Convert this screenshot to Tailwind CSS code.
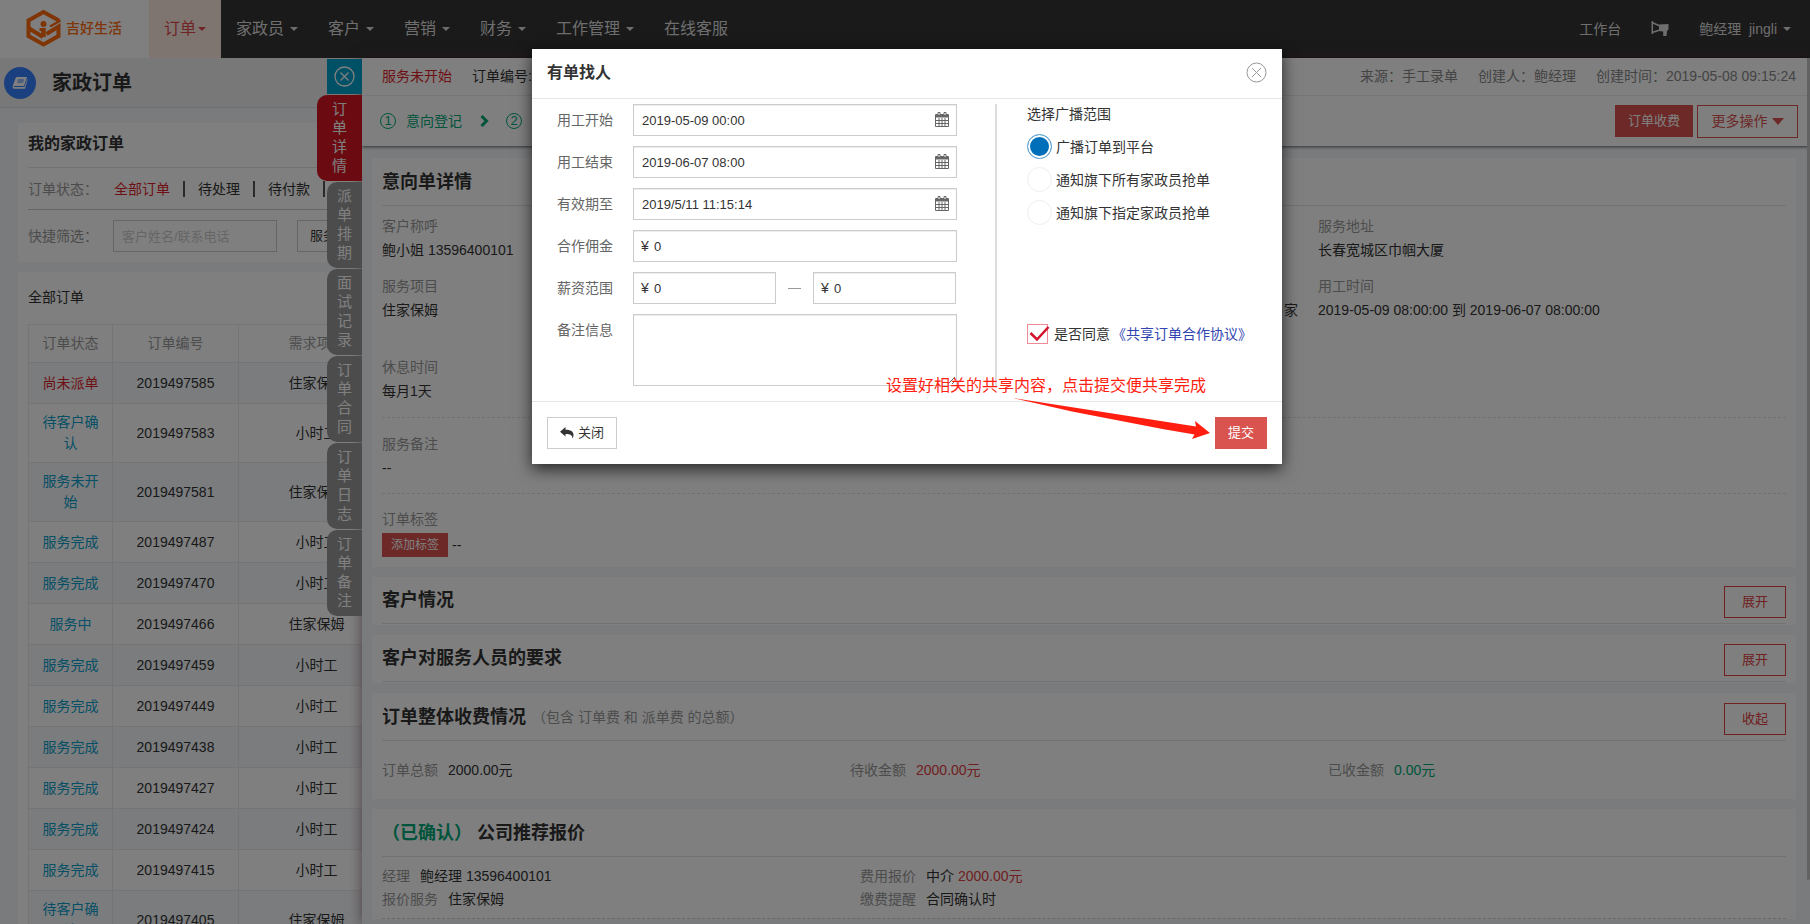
<!DOCTYPE html>
<html lang="zh-CN">
<head>
<meta charset="utf-8">
<title>家政订单</title>
<script src="https://cdn.jsdelivr.net/npm/@tailwindcss/browser@4"></script>
</head>
<body class="font-['Liberation_Sans','Noto_Sans_CJK_SC',sans-serif] text-sm leading-5 text-[#333]">
<div class="relative h-screen overflow-hidden bg-[#f3f6fb]">

<!-- top navigation -->
<header class="flex h-[58px] items-center bg-[#343434] text-base text-[#ddd]">
  <a href="#" class="flex h-full w-[149px] shrink-0 items-center gap-1 bg-white pb-0.5 pl-[26px] text-sm font-medium text-[#ff6a0d]">
    <svg class="h-[38px] w-9" viewBox="0 0 36 38" fill="none" stroke="#ff6a0d">
      <path d="M33 11.500 17.500 3 2.500 11.500v9" stroke-width="4"/>
      <path d="M2.500 19 17 28M2.500 20.500v6.500l15 8.500 15-8.500V17.500L20.500 25" stroke-width="4"/>
      <path d="M34.500 11.500 24 17.500" stroke-width="2.500"/>
      <circle cx="17.500" cy="15" r="3" fill="#ff6a0d" stroke="none"/>
      <path d="M13.500 20.500h3" stroke-width="3"/><path d="M17.500 19v9" stroke-width="4.500"/>
    </svg>
    <span>吉好生活</span>
  </a>
  <nav class="flex h-full items-center whitespace-nowrap">
    <a href="#" class="flex h-full items-center gap-0.5 bg-[#ffebe1] px-[15px] text-[#e0494b]">订单<svg class="h-1 w-2" viewBox="0 0 8 4"><path d="M0 0h8L4 4z" fill="currentColor"/></svg></a>
    <a href="#" class="flex items-center gap-1.5 px-[15px]">家政员<svg class="h-1 w-2" viewBox="0 0 8 4"><path d="M0 0h8L4 4z" fill="currentColor"/></svg></a>
    <a href="#" class="flex items-center gap-1.5 px-[15px]">客户<svg class="h-1 w-2" viewBox="0 0 8 4"><path d="M0 0h8L4 4z" fill="currentColor"/></svg></a>
    <a href="#" class="flex items-center gap-1.5 px-[15px]">营销<svg class="h-1 w-2" viewBox="0 0 8 4"><path d="M0 0h8L4 4z" fill="currentColor"/></svg></a>
    <a href="#" class="flex items-center gap-1.5 px-[15px]">财务<svg class="h-1 w-2" viewBox="0 0 8 4"><path d="M0 0h8L4 4z" fill="currentColor"/></svg></a>
    <a href="#" class="flex items-center gap-1.5 px-[15px]">工作管理<svg class="h-1 w-2" viewBox="0 0 8 4"><path d="M0 0h8L4 4z" fill="currentColor"/></svg></a>
    <a href="#" class="px-[15px]">在线客服</a>
  </nav>
  <div class="ml-auto flex items-center gap-[30px] pr-[19px] text-sm">
    <a href="#">工作台</a>
    <button type="button" aria-label="公告" class="h-4 w-[18px]">
      <svg class="h-4 w-[18px]" viewBox="0 0 18 16" fill="none" stroke="#ddd" stroke-width="1.500"><path d="M1.300 0v13M1 1.500 9 5M1 11.500l8-2.500"/><path d="M8 3.500 17.500 3v5.500L16 10l-.5 5h-3.300v-4.500L8 10z" fill="#ddd" stroke="none"/></svg>
    </button>
    <a href="#" class="flex items-center gap-1.5"><span>鲍经理&nbsp; jingli</span><svg class="h-1 w-2" viewBox="0 0 8 4"><path d="M0 0h8L4 4z" fill="currentColor"/></svg></a>
  </div>
</header>

<!-- order list page -->
<main>
  <div class="flex h-[50px] items-center gap-4 border-b border-[#d8dde2] bg-[#f1f1f1] pl-1">
    <span class="flex size-8 items-center justify-center rounded-full bg-[#3680ff]">
      <svg class="h-3.5 w-4" viewBox="0 0 16 14"><path d="M5 1h10l-3 9H2.500q-1 0-.8 1h10.800l2.800-8 .4.600L13 12.800H2Q0 12.500.8 9.800L3.500 2.300Q4 1 5 1z" fill="#fff"/><path d="M6 4h6M5.300 6h6" stroke="#3680ff"/></svg>
    </span>
    <h1 class="text-xl font-bold">家政订单</h1>
  </div>

  <section class="ml-[18px] mt-[15px] bg-white px-[10px] pb-[10px]">
    <h2 class="flex h-[45px] items-center border-b border-[#e5e5e5] pb-0.5 text-base font-bold">我的家政订单</h2>
    <div class="flex h-[42px] items-center border-b border-[#ccc]">
      <span class="w-[86px] text-[#999]">订单状态：</span>
      <a href="#" class="text-[#dd1f2b]">全部订单</a>
      <span class="mx-[13px] h-4 w-0.5 bg-[#555]"></span>
      <a href="#">待处理</a>
      <span class="mx-[13px] h-4 w-0.5 bg-[#555]"></span>
      <a href="#">待付款</a>
      <span class="mx-[13px] h-4 w-0.5 bg-[#555]"></span>
    </div>
    <div class="flex items-center pt-[10px]">
      <label for="quick" class="w-[85px] text-[#999]">快捷筛选：</label>
      <input id="quick" type="text" placeholder="客户姓名/联系电话" class="h-8 w-[164px] border border-[#ccc] px-2 text-[13px] placeholder:text-[#ccc]">
      <select aria-label="服务项目" class="ml-5 h-8 w-[164px] appearance-none border border-[#ccc] px-3 text-[13px]"><option>服务项目</option></select>
    </div>
  </section>

  <section class="ml-[18px] mt-[10px] bg-white px-[10px]">
    <h2 class="flex h-[52px] items-center pb-0.5 text-sm">全部订单</h2>
    <table class="w-full table-fixed border-collapse text-center leading-[21px] [&_td]:border [&_td]:border-[#eaeaea] [&_td]:px-3 [&_td]:py-2 [&_th]:border [&_th]:border-[#eaeaea] [&_a]:text-[#0aa0cc] [&_tbody_tr]:h-[41px] [&_tbody_tr:nth-child(odd)]:bg-[#f5f8fb]">
      <colgroup><col class="w-[84px]"><col class="w-[126px]"><col class="w-[156px]"><col></colgroup>
      <thead><tr class="h-[38px] text-[#999]"><th class="font-normal">订单状态</th><th class="font-normal">订单编号</th><th class="font-normal">需求项目</th><th></th></tr></thead>
      <tbody>
        <tr><td class="text-[#dd1f2b]">尚未派单</td><td>2019497585</td><td>住家保姆</td><td></td></tr>
        <tr><td><a href="#">待客户确认</a></td><td>2019497583</td><td>小时工</td><td></td></tr>
        <tr><td><a href="#">服务未开始</a></td><td>2019497581</td><td>住家保姆</td><td></td></tr>
        <tr><td><a href="#">服务完成</a></td><td>2019497487</td><td>小时工</td><td></td></tr>
        <tr><td><a href="#">服务完成</a></td><td>2019497470</td><td>小时工</td><td></td></tr>
        <tr><td><a href="#">服务中</a></td><td>2019497466</td><td>住家保姆</td><td></td></tr>
        <tr><td><a href="#">服务完成</a></td><td>2019497459</td><td>小时工</td><td></td></tr>
        <tr><td><a href="#">服务完成</a></td><td>2019497449</td><td>小时工</td><td></td></tr>
        <tr><td><a href="#">服务完成</a></td><td>2019497438</td><td>小时工</td><td></td></tr>
        <tr><td><a href="#">服务完成</a></td><td>2019497427</td><td>小时工</td><td></td></tr>
        <tr><td><a href="#">服务完成</a></td><td>2019497424</td><td>小时工</td><td></td></tr>
        <tr><td><a href="#">服务完成</a></td><td>2019497415</td><td>小时工</td><td></td></tr>
        <tr><td><a href="#">待客户确认</a></td><td>2019497405</td><td>住家保姆</td><td></td></tr>
      </tbody>
    </table>
  </section>
</main>

<!-- order detail drawer -->
<aside class="absolute bottom-0 right-0 top-[58px] w-4/5 bg-[#f3f6fb] shadow-[0_0_12px_rgba(80,40,50,0.6)]">
  <div class="absolute right-full top-px flex flex-col items-end gap-px text-[15px] leading-[19px] text-white">
    <button type="button" aria-label="收起详情" class="flex size-[35px] items-center justify-center bg-[#00a0cc]">
      <svg class="size-[21px]" viewBox="0 0 21 21" fill="none" stroke="#fff" stroke-width="1.300"><circle cx="10.500" cy="10.500" r="9.500"/><path d="m6.500 6.500 8 8M14.500 6.500l-8 8"/></svg>
    </button>
    <button type="button" class="w-[45px] rounded-l-[10px] bg-[#d71522] px-[15px] pb-1.5 pt-1">订单详情</button>
    <button type="button" class="w-[35px] rounded-l-[10px] bg-[#999] px-[10px] pb-1.5 pt-1">派单排期</button>
    <button type="button" class="w-[35px] rounded-l-[10px] bg-[#999] px-[10px] pb-1.5 pt-1">面试记录</button>
    <button type="button" class="w-[35px] rounded-l-[10px] bg-[#999] px-[10px] pb-1.5 pt-1">订单合同</button>
    <button type="button" class="w-[35px] rounded-l-[10px] bg-[#999] px-[10px] pb-1.5 pt-1">订单日志</button>
    <button type="button" class="w-[35px] rounded-l-[10px] bg-[#999] px-[10px] pb-1.5 pt-1">订单备注</button>
  </div>
  <div class="absolute right-0 top-0 h-[822px] w-[3px] rounded-b bg-[#c4c4c4]"></div>

  <div class="bg-white shadow-[0_1px_3px_rgba(0,0,0,0.6)]">
    <div class="flex h-[38px] items-center gap-5 border-b border-[#eee] pb-0.5 pl-5 pr-[14px]">
      <span class="text-[#dd1f2b]">服务未开始</span>
      <span>订单编号:</span>
      <span class="ml-auto text-[#888]">来源：手工录单</span>
      <span class="text-[#888]">创建人：鲍经理</span>
      <span class="text-[#888]">创建时间：2019-05-08 09:15:24</span>
    </div>
    <div class="flex h-[50px] items-center pl-[18px] pr-3 text-[#00a878]">
      <span class="flex size-4 items-center justify-center rounded-full border border-[#00a878] text-[13px]">1</span>
      <span class="ml-2.5">意向登记</span>
      <svg class="ml-[18px] h-3 w-[9px]" viewBox="0 0 9 12" fill="none" stroke="#00a878" stroke-width="3"><path d="m1.500 1 5 5-5 5"/></svg>
      <span class="ml-[17px] flex size-4 items-center justify-center rounded-full border border-[#00a878] text-[13px]">2</span>
      <button type="button" class="ml-auto h-8 w-[78px] bg-[#d9534f] text-[13px] text-white">订单收费</button>
      <button type="button" class="ml-1 flex h-[33px] w-[101px] items-center justify-center gap-1 border border-[#d9534f] text-[#d9534f]">更多操作<svg class="h-[7px] w-3" viewBox="0 0 12 7"><path d="M0 0h12L6 7z" fill="currentColor"/></svg></button>
    </div>
  </div>

  <div class="flex flex-col gap-[10px] py-3 pl-[10px] pr-[14px]">
    <section class="bg-white px-[10px] pb-[10px]">
      <h2 class="flex h-12 items-center border-b border-[#e5e5e5] text-lg font-bold">意向单详情</h2>
      <dl class="grid grid-cols-3 pt-2 [&_dt]:h-6 [&_dt]:leading-6 [&_dt]:text-[#999] [&_dd]:h-6 [&_dd]:leading-6">
        <div class="h-[60px]"><dt>客户称呼</dt><dd>鲍小姐 13596400101</dd></div>
        <div></div>
        <div><dt>服务地址</dt><dd>长春宽城区巾帼大厦</dd></div>
        <div class="h-[81px]"><dt>服务项目</dt><dd>住家保姆</dd></div>
        <div class="pr-5 text-right"><dt></dt><dd>家</dd></div>
        <div><dt>用工时间</dt><dd>2019-05-09 08:00:00 到 2019-06-07 08:00:00</dd></div>
        <div class="h-[62px]"><dt>休息时间</dt><dd>每月1天</dd></div>
      </dl>
      <div class="flex h-[76px] flex-col justify-center border-t border-dashed border-[#e0e0e0] leading-6"><span class="text-[#999]">服务备注</span><span>--</span></div>
      <div class="border-t border-dashed border-[#e0e0e0] pt-[13px]">
        <div class="h-[26px] leading-6 text-[#999]">订单标签</div>
        <div class="flex items-center gap-1"><button type="button" class="h-6 w-[66px] bg-[#d9534f] text-xs text-white">添加标签</button><span>--</span></div>
      </div>
    </section>

    <section class="bg-white px-[10px] pb-px">
      <div class="flex h-[47px] items-center border-b border-[#e5e5e5]"><h2 class="text-lg font-bold">客户情况</h2><button type="button" class="ml-auto mt-1 h-8 w-[62px] border border-[#e04040] text-[13px] text-[#e04040]">展开</button></div>
    </section>
    <section class="bg-white px-[10px] pb-px">
      <div class="flex h-[47px] items-center border-b border-[#e5e5e5]"><h2 class="text-lg font-bold">客户对服务人员的要求</h2><button type="button" class="ml-auto mt-1 h-8 w-[62px] border border-[#e04040] text-[13px] text-[#e04040]">展开</button></div>
    </section>
    <section class="bg-white px-[10px]">
      <div class="flex h-12 items-center border-b border-[#e5e5e5]"><h2 class="text-lg font-bold">订单整体收费情况</h2><span class="ml-1.5 text-[#999]">（包含 订单费 和 派单费 的总额）</span><button type="button" class="ml-auto mt-1 h-8 w-[62px] border border-[#e04040] text-[13px] text-[#e04040]">收起</button></div>
      <div class="grid h-[58px] grid-cols-3 items-center">
        <div class="flex gap-[10px]"><span class="text-[#999]">订单总额</span><span>2000.00元</span></div>
        <div class="flex gap-[10px]"><span class="text-[#999]">待收金额</span><span class="text-[#e04040]">2000.00元</span></div>
        <div class="flex gap-[10px] pl-[10px]"><span class="text-[#999]">已收金额</span><span class="text-[#00a878]">0.00元</span></div>
      </div>
    </section>
    <section class="bg-white px-[10px]">
      <h2 class="flex h-12 items-center gap-[5px] border-b border-[#e5e5e5] text-lg font-bold"><span class="text-[#00a878]">（已确认）</span>公司推荐报价</h2>
      <div class="grid h-[62px] grid-cols-3 content-center gap-y-[3px] border-b border-dashed border-[#d0d0d0]">
        <div class="flex gap-[10px]"><span class="text-[#999]">经理</span><span>鲍经理 13596400101</span></div>
        <div class="col-span-2 flex gap-[10px] pl-[10px]"><span class="text-[#999]">费用报价</span><span>中介 <b class="font-normal text-[#e04040]">2000.00元</b></span></div>
        <div class="flex gap-[10px]"><span class="text-[#999]">报价服务</span><span>住家保姆</span></div>
        <div class="col-span-2 flex gap-[10px] pl-[10px]"><span class="text-[#999]">缴费提醒</span><span>合同确认时</span></div>
      </div>
    </section>
  </div>
</aside>

<!-- dialog -->
<div class="absolute inset-0 bg-black/50 pl-1 pt-[49px]">
  <form role="dialog" aria-labelledby="dlg" class="relative mx-auto w-[750px] bg-white shadow-[0_5px_15px_rgba(0,0,0,0.7)]">
    <div class="flex h-[50px] items-center justify-between border-b border-[#e5e5e5] px-[15px] pb-0.5">
      <h2 id="dlg" class="text-base font-bold">有单找人</h2>
      <button type="button" aria-label="关闭"><svg class="size-[21px]" viewBox="0 0 21 21" fill="none" stroke="#999"><circle cx="10.500" cy="10.500" r="9.500"/><path d="m6 6 9 9M15 6l-9 9"/></svg></button>
    </div>
    <div class="flex pb-[15px] pl-[25px] pt-[5px]">
      <div class="flex w-[400px] flex-col gap-[10px] text-[#666] [&_input]:h-8 [&_input]:w-full [&_input]:border [&_input]:border-[#ccc] [&_input]:text-[13px] [&_input]:text-[#333] [&_input]:shadow-[inset_0_1px_1px_rgba(0,0,0,0.075)]">
        <div class="flex items-center"><label for="f1" class="w-[76px] shrink-0">用工开始</label><div class="relative flex-1"><input id="f1" value="2019-05-09 00:00" class="px-2"><svg class="absolute right-2 top-2 h-[15px] w-3.5" viewBox="0 0 14 15" fill="none" stroke="#666"><path d="M.5 2.500h13v12H.5zM.5 8.500h13M.5 11.500h13M4 6v8.500M7 6v8.500M10 6v8.500"/><path d="M.5 3h13v2.500H.5z" fill="#666" stroke="none"/><path d="M3 .5h2v3H3zM9 .5h2v3H9z" fill="#fff"/></svg></div></div>
        <div class="flex items-center"><label for="f2" class="w-[76px] shrink-0">用工结束</label><div class="relative flex-1"><input id="f2" value="2019-06-07 08:00" class="px-2"><svg class="absolute right-2 top-2 h-[15px] w-3.5" viewBox="0 0 14 15" fill="none" stroke="#666"><path d="M.5 2.500h13v12H.5zM.5 8.500h13M.5 11.500h13M4 6v8.500M7 6v8.500M10 6v8.500"/><path d="M.5 3h13v2.500H.5z" fill="#666" stroke="none"/><path d="M3 .5h2v3H3zM9 .5h2v3H9z" fill="#fff"/></svg></div></div>
        <div class="flex items-center"><label for="f3" class="w-[76px] shrink-0">有效期至</label><div class="relative flex-1"><input id="f3" value="2019/5/11 11:15:14" class="px-2"><svg class="absolute right-2 top-2 h-[15px] w-3.5" viewBox="0 0 14 15" fill="none" stroke="#666"><path d="M.5 2.500h13v12H.5zM.5 8.500h13M.5 11.500h13M4 6v8.500M7 6v8.500M10 6v8.500"/><path d="M.5 3h13v2.500H.5z" fill="#666" stroke="none"/><path d="M3 .5h2v3H3zM9 .5h2v3H9z" fill="#fff"/></svg></div></div>
        <div class="flex items-center"><label for="f4" class="w-[76px] shrink-0">合作佣金</label><div class="relative flex-1"><input id="f4" value="0" class="pl-5"><span class="absolute left-2 top-1.5 text-[#333]">¥</span></div></div>
        <div class="flex items-center"><label for="f5" class="w-[76px] shrink-0">薪资范围</label><div class="relative w-[143px]"><input id="f5" value="0" class="pl-5"><span class="absolute left-2 top-1.5 text-[#333]">¥</span></div><span class="mx-3 h-px w-[13px] bg-[#999]"></span><div class="relative w-[143px]"><input aria-label="薪资上限" value="0" class="pl-5"><span class="absolute left-2 top-1.5 text-[#333]">¥</span></div></div>
        <div class="flex"><label for="f6" class="w-[76px] shrink-0 pt-1.5">备注信息</label><textarea id="f6" class="block h-[72px] flex-1 border border-[#ccc] shadow-[inset_0_1px_1px_rgba(0,0,0,0.075)]"></textarea></div>
      </div>
      <fieldset class="ml-[38px] flex flex-1 flex-col border-l-2 border-[#ddd] pl-[30px]">
        <div class="pb-[10px]">选择广播范围</div>
        <div class="flex flex-col gap-2">
          <label class="flex h-[25px] items-center gap-1"><input type="radio" name="range" checked class="size-[25px] appearance-none rounded-full border border-[#eee] checked:border-[#66a9d5] checked:bg-[#006fb9] checked:shadow-[inset_0_0_0_2px_#fff]">广播订单到平台</label>
          <label class="flex h-[25px] items-center gap-1"><input type="radio" name="range" class="size-[25px] appearance-none rounded-full border border-[#eee] checked:border-[#66a9d5] checked:bg-[#006fb9]">通知旗下所有家政员抢单</label>
          <label class="flex h-[25px] items-center gap-1"><input type="radio" name="range" class="size-[25px] appearance-none rounded-full border border-[#eee] checked:border-[#66a9d5] checked:bg-[#006fb9]">通知旗下指定家政员抢单</label>
        </div>
        <div class="mb-[42px] mt-auto flex items-center gap-0.5">
          <label class="relative flex items-center gap-1.5"><input type="checkbox" checked class="h-5 w-[21px] appearance-none border border-[#f08a94]"><svg class="absolute left-0.5 top-px h-[17px] w-[21px]" viewBox="0 0 21 17" fill="none" stroke="#d4122c" stroke-width="2.500"><path d="m1.500 8 6.500 6.500L19.500 2"/></svg>是否同意</label>
          <a href="#" class="text-[#3045b0]">《共享订单合作协议》</a>
        </div>
      </fieldset>
    </div>
    <div class="flex h-[63px] items-center justify-between border-t border-[#e5e5e5] px-[15px] text-[13px]">
      <button type="button" class="flex h-8 w-[70px] items-center justify-center gap-1 border border-[#ccc]"><svg class="h-3 w-3.5" viewBox="0 0 14 12"><path d="M5.500 0v2.700c5 0 8 1.800 8 5.300 0 1.500-.4 2.700-1 3.700.1-3.500-2-4.700-7-4.700v2.600L0 4.800z" fill="#333"/></svg>关闭</button>
      <button type="submit" class="h-8 w-[52px] bg-[#d9534f] text-white">提交</button>
    </div>
    <!-- instruction note and arrow -->
    <p class="absolute left-[354px] top-[325px] whitespace-nowrap text-base leading-6 text-[#ff1e10]">设置好相关的共享内容，点击提交便共享完成</p>
    <svg class="absolute left-[480px] top-[348px] h-[46px] w-[200px]" viewBox="0 0 200 46"><path d="M1 1 184 29.500l-1-5.500 15 12-18 6 2.500-4.500-32-5.500L60 14.500z" fill="#ff1e10"/></svg>
  </form>
</div>
</div>
</body>
</html>
